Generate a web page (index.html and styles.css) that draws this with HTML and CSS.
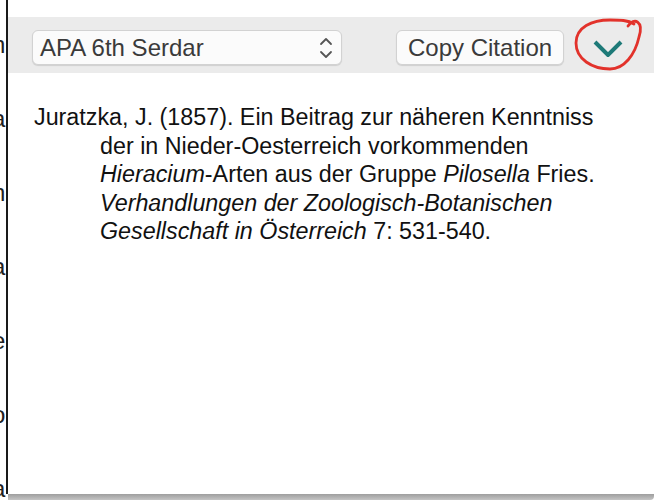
FILE: index.html
```html
<!DOCTYPE html>
<html>
<head>
<meta charset="utf-8">
<link rel="stylesheet" href="styles.css">
</head>
<body>
<div class="screen">
  <div class="behind">
    <div class="glyph">n</div>
    <div class="glyph">a</div>
    <div class="glyph">n</div>
    <div class="glyph">a</div>
    <div class="glyph">e</div>
    <div class="glyph">o</div>
    <div class="glyph">a</div>
  </div>
  <div class="divider"></div>
  <div class="panel">
    <div class="top-gap"></div>
    <div class="toolbar">
      <div class="select">
        <span class="select-label">APA 6th Serdar</span>
        <svg class="updown" width="14" height="26" viewBox="0 0 14 26">
          <path d="M2 9 L7 4 L12 9" fill="none" stroke="#555" stroke-width="1.8" stroke-linecap="round" stroke-linejoin="round"/>
          <path d="M2 17 L7 22 L12 17" fill="none" stroke="#555" stroke-width="1.8" stroke-linecap="round" stroke-linejoin="round"/>
        </svg>
      </div>
      <div class="button">Copy Citation</div>
      <div class="toggle">
        <svg width="30" height="18" viewBox="0 0 30 18">
          <path d="M2 3 L15 16 L28 3" fill="none" stroke="#1e7a78" stroke-width="4" stroke-linecap="butt" stroke-linejoin="miter"/>
        </svg>
        <svg class="scribble" width="76" height="60" viewBox="0 0 76 60">
          <path d="M56 11 C62 2 72 6 67 22 C63 40 52 54 38 54 C20 54 4 44 4 28 C4 12 20 5 38 5 C48 5 56 5 62 9" fill="none" stroke="#e2322b" stroke-width="2.8" stroke-linecap="round"/>
        </svg>
      </div>
    </div>
    <div class="content">
      <p class="citation">Juratzka, J. (1857). Ein Beitrag zur näheren Kenntniss<br>der in Nieder-Oesterreich vorkommenden<br><i>Hieracium</i>-Arten aus der Gruppe <i>Pilosella</i> Fries.<br><i>Verhandlungen der Zoologisch-Botanischen</i><br><i>Gesellschaft in Österreich</i> 7: 531-540.</p>
    </div>
    <div class="bottom-bar"></div>
  </div>
</div>
</body>
</html>
```

FILE: styles.css
```css
html, body {
  margin: 0;
  padding: 0;
  background: #ffffff;
}
body {
  width: 654px;
  height: 500px;
  overflow: hidden;
  font-family: "Liberation Sans", Arial, sans-serif;
}
.screen {
  display: flex;
  height: 500px;
}
.behind {
  width: 6px;
  overflow: hidden;
  padding-top: 8px;
  background: #fff;
}
.glyph {
  height: 74px;
  line-height: 74px;
  font-size: 24px;
  color: #222;
  margin-left: -8px;
}
.divider {
  width: 2px;
  background: #1a1a1a;
  height: 494px;
}
.panel {
  flex: 1;
  display: flex;
  flex-direction: column;
  height: 500px;
}
.top-gap {
  height: 17px;
  background: #fff;
}
.toolbar {
  height: 56px;
  box-sizing: border-box;
  background: #ebebeb;
  display: flex;
  align-items: flex-start;
  padding: 13px 0 0 24px;
}
.select {
  width: 310px;
  height: 35px;
  box-sizing: border-box;
  border: 1px solid #d2d2d2;
  border-radius: 6px;
  background: #fbfbfb;
  box-shadow: 0 1px 1px rgba(0,0,0,0.12);
  display: flex;
  align-items: center;
  justify-content: space-between;
  padding: 0 8px 0 7px;
}
.select-label {
  font-size: 24px;
  color: #3a3a3a;
}
.updown {
  display: block;
}
.button {
  margin-left: 54px;
  width: 168px;
  height: 35px;
  box-sizing: border-box;
  border: 1px solid #d2d2d2;
  border-radius: 6px;
  background: #fbfbfb;
  box-shadow: 0 1px 1px rgba(0,0,0,0.12);
  font-size: 24px;
  color: #3a3a3a;
  display: flex;
  align-items: center;
  padding-left: 11px;
  white-space: nowrap;
}
.toggle {
  position: relative;
  margin-left: 29px;
  margin-top: 9px;
  width: 30px;
  height: 18px;
}
.toggle svg {
  display: block;
}
.scribble {
  position: absolute;
  left: -21px;
  top: -24px;
}
.content {
  flex: 1;
  padding: 30px 0 0 26px;
}
.citation {
  margin: 0;
  font-size: 23.3px;
  line-height: 28.6px;
  color: #111;
  padding-left: 66px;
  text-indent: -66px;
}
.bottom-bar {
  height: 6px;
  background: linear-gradient(#9e9e9e, #c4c4c4);
  border-bottom-right-radius: 4px;
}
```
